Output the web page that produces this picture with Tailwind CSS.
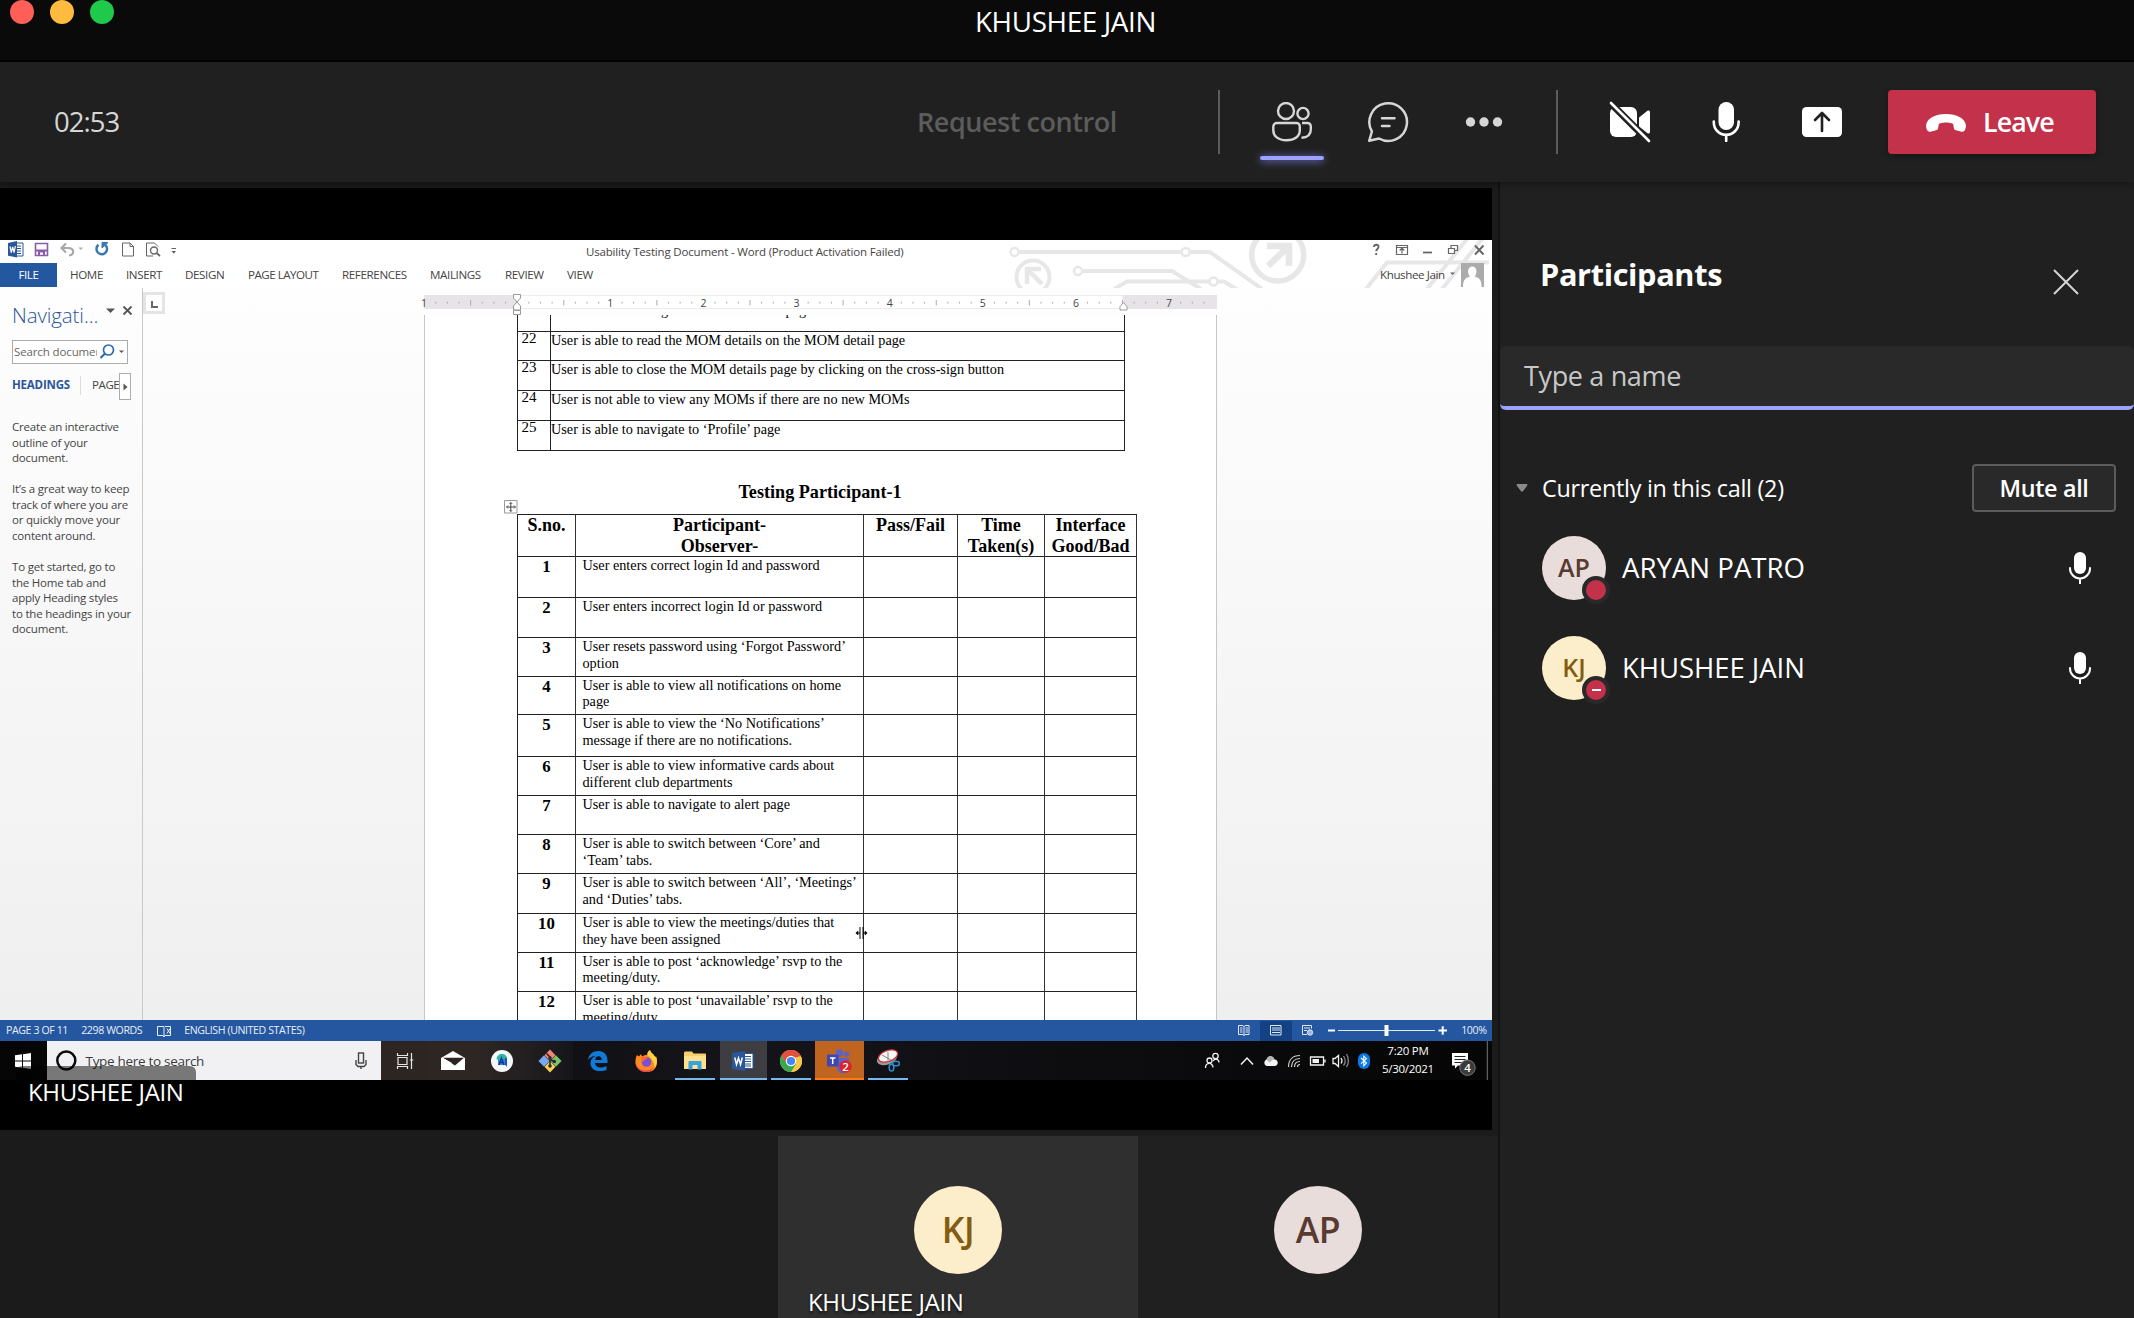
<!DOCTYPE html>
<html lang="en">
<head>
<meta charset="utf-8">
<title>Call with KHUSHEE JAIN</title>
<script src="https://cdn.jsdelivr.net/npm/@tailwindcss/browser@4"></script>
</head>
<body class="w-[2134px] h-[1318px] overflow-hidden bg-[#1b1b1b] font-['Open_Sans',sans-serif] text-white whitespace-nowrap">

<!-- Window title bar -->
<header class="relative h-[62px] bg-[#0a0a0a] border-b-2 border-black">
  <div class="flex gap-4 pl-[10px]">
    <i class="size-6 rounded-full bg-[#ff5f57]"></i><i class="size-6 rounded-full bg-[#ffbb3f]"></i><i class="size-6 rounded-full bg-[#1ec94c]"></i>
  </div>
  <div class="absolute inset-x-0 top-0 h-[44px] flex items-center justify-center text-[27.8px] tracking-[-0.35px] leading-none pr-[3px]">KHUSHEE JAIN</div>
</header>

<!-- Call toolbar -->
<section class="relative z-10 flex items-center h-[120px] bg-[#202020] shadow-[0_2px_6px_rgba(0,0,0,0.35)]">
  <div class="w-[917px] pl-[54px] text-[27.5px] tracking-[-1px] text-[#d6d6d6]">02:53</div>
  <div class="w-[301px] text-[27px] font-semibold tracking-[-0.45px] text-[#5c5c5c]">Request control</div>
  <div class="w-[2px] h-16 bg-[#5c5c5c]"></div>
  <div class="relative w-24 h-full ml-6 flex items-center justify-center">
    <svg class="w-10 h-10" viewBox="0 0 40 40" fill="none" stroke="#d6d6d6" stroke-width="2.4"><circle cx="14" cy="9" r="8"/><circle cx="31" cy="11.500" r="5.600"/><path d="M5 21h19.500a3.300 3.300 0 0 1 3.300 3.300v3.900c0 6-5 10-13.400 10S1.300 34 1.300 28.200v-3.900A3.600 3.600 0 0 1 5 21z"/><path d="M30 21h5.500a3.300 3.300 0 0 1 3.300 3.300v3.200c0 5-3.500 8-9.300 8.300"/></svg>
    <div class="absolute left-4 top-[94px] w-16 h-1 rounded-full bg-[#9ea2ff] shadow-[0_1px_8px_#7f85f5]"></div>
  </div>
  <div class="w-24 flex justify-center">
    <svg class="w-11 h-11" viewBox="0 0 44 44" fill="none" stroke="#d6d6d6" stroke-width="2.500" stroke-linecap="round" stroke-linejoin="round"><path d="M3.200 40.800l2.700-9.300A18.800 18.800 0 1 1 13 38.500z"/><path d="M16 18.300h12.500M16 26h7.500"/></svg>
  </div>
  <div class="w-24 flex justify-center"><svg class="w-10 h-10" viewBox="0 0 40 40" fill="#d6d6d6"><circle cx="6.500" cy="20" r="4.700"/><circle cx="20" cy="20" r="4.700"/><circle cx="33.500" cy="20" r="4.700"/></svg></div>
  <div class="w-[2px] h-16 bg-[#5c5c5c] ml-6 mr-6"></div>
  <div class="w-24 flex justify-center">
    <svg class="w-11 h-11" viewBox="0 0 44 44" fill="#fff"><rect x="2" y="7" width="27" height="30" rx="6"/><path d="M31 17.500l8.500-6.700c1-.8 2.500-.1 2.500 1.200v20c0 1.300-1.500 2-2.500 1.200L31 26.500z"/><path d="M2 2.500L42 42.500" stroke="#202020" stroke-width="7"/><path d="M3 3L41 41" stroke="#fff" stroke-width="2.600" stroke-linecap="round"/></svg>
  </div>
  <div class="w-24 flex justify-center">
    <svg class="w-7 h-10" viewBox="0 0 28 40" fill="none" stroke="#fff" stroke-width="2.600" stroke-linecap="round"><rect x="6.500" y="0" width="15.500" height="28" rx="7.750" fill="#fff" stroke="none"/><path d="M1.800 19.500v1a12.400 12.400 0 0 0 24.800 0v-1M14.200 33v6"/></svg>
  </div>
  <div class="w-24 flex justify-center">
    <svg class="w-10 h-[30px]" viewBox="0 0 40 30"><rect width="40" height="30" rx="4.500" fill="#fff"/><path d="M20 24V6.500M13 13l7-7 7 7" fill="none" stroke="#202020" stroke-width="2.600" stroke-linecap="round" stroke-linejoin="round"/></svg>
  </div>
  <div class="w-[208px] h-16 ml-[18px] flex items-center pl-[38px] pt-px rounded-[4px] bg-[#c4314b] text-[26.8px] font-semibold tracking-[-0.9px] shadow-[0_3px_6px_rgba(0,0,0,0.3)]">
    <svg class="w-10 h-[18px] mr-[17px]" viewBox="0 0 40 18" fill="#fff"><path d="M20 0C31 0 38.500 4.500 39.800 10.500c.4 2.200-.2 4.500-1.400 6.200-.7 1-1.800 1.300-2.900 1L30 16.200c-1.200-.3-2-1.200-2.200-2.500L27.200 10c-2-1-4.400-1.500-7.200-1.500S14.800 9 12.800 10l-.6 3.700c-.2 1.300-1 2.200-2.200 2.500l-5.500 1.500c-1.100.3-2.200 0-2.900-1C.4 15-.2 12.700.2 10.500 1.500 4.500 9 0 20 0z"/></svg>Leave
  </div>
</section>

<main class="flex h-[1136px]">
  <!-- Stage -->
  <div class="w-[1498px]">
    <div class="relative w-[1492px] h-[942px] mt-[6px] bg-black pt-[52px]">

      <!-- Shared screen: Word -->
      <div class="w-[1492px] h-[780px] overflow-hidden bg-gradient-to-b from-white to-[#efefef] text-[#444]">
        <div class="relative h-[48px] bg-white">
          <svg class="absolute inset-0" width="1492" height="48" viewBox="0 240 1492 48" fill="none" stroke="#e7e7e7" stroke-width="4">
            <path d="M1019 252h162M1190 252h20l52 37M1082 271h90l29 18M1114 289l13-7.500h82M1218 281.500h6l13 8M1366 289l21-26.500h102M1427 289l40-50M1442 289l40-50"/>
            <g stroke-width="2.500"><circle cx="1014.500" cy="252" r="4"/><circle cx="1185.700" cy="252" r="4"/><circle cx="1078" cy="271" r="4"/><circle cx="1213.500" cy="281.500" r="4"/></g>
            <circle cx="1033" cy="277" r="16.500"/><path d="M1027 284v-15h14M1028 270l14 14" stroke-width="4.500"/>
            <circle cx="1277.700" cy="255" r="26" stroke-width="5.500"/><path d="M1267 246h22v20M1288 247l-20 19" stroke-width="6.500"/>
          </svg>
          <div class="relative flex items-center h-[23px]">
            <svg class="w-[180px] h-[23px] shrink-0" viewBox="0 1 180 23" fill="none">
              <path d="M16 4h7v13h-7" fill="#fff" stroke="#2b579a"/><path d="M17 7h4M17 9.500h4M17 12h4M17 14.500h4" stroke="#2b579a"/><path d="M8 4l9-2v16.500l-9-1.800z" fill="#2b579a"/><path d="M10 7.500l1.300 6 1.400-5.500 1.400 5.500 1.300-6.500" stroke="#fff" stroke-width="1.200"/>
              <path d="M35.500 4.500h12v12h-12z" stroke="#8a5ba8" stroke-width="1.600"/><path d="M36 11.500h11M39 16v-3.500h5V16" stroke="#8a5ba8" stroke-width="2"/>
              <path d="M66 4.500L61.500 9l4.500 4.500M62 9h6c7 0 6.500 7 1 7.500" stroke="#a9a9a9" stroke-width="2.200"/><path d="M78.500 8.500h4.500l-2.200 2.500z" fill="#aaa"/>
              <path d="M98.500 5.800a5.300 5.300 0 1 0 6.800 0.200" stroke="#3a78b5" stroke-width="2.500"/><path d="M108 3.500h-6v5.500z" fill="#3a78b5" stroke="#3a78b5"/>
              <path d="M122.500 4h7.500l3.500 3.500v9.500h-11zM130 4v3.500h3.500" stroke="#666"/>
              <path d="M153 17h-6.500V4h8l3.500 3.500" stroke="#666"/><circle cx="154" cy="11.500" r="3.500" stroke="#666" stroke-width="1.400"/><path d="M156.500 14l3.500 3" stroke="#666" stroke-width="1.800"/>
              <path d="M171.500 9.500h4.500" stroke="#666"/><path d="M171.500 12h4.500l-2.200 2.500z" fill="#555"/>
            </svg>
            <div class="ml-[406px] w-[782px] shrink-0 text-[11.5px] tracking-[-0.17px] leading-none">Usability Testing Document - Word (Product Activation Failed)</div>
            <svg class="w-[117px] h-[23px] shrink-0" viewBox="1368 0 117 23" fill="none" stroke="#666" stroke-width="1.200">
              <path d="M1374 7c0-3 5-3 4.500 0 0 2-2.300 2-2.300 4.300M1376.200 13v2" stroke-width="1.900"/>
              <path d="M1396.500 5.500h11v9h-11zM1396.500 7.500h11M1402 13.500v-5M1399.700 10.500l2.300-2.300 2.300 2.300"/>
              <path d="M1423 12.500h9" stroke-width="1.800"/><path d="M1448.500 8.500h6v5h-6zM1451 8V5.500h6.500v5H1455"/><path d="M1475 5.500l8.500 9M1483.500 5.500l-8.500 9" stroke-width="1.900"/>
            </svg>
          </div>
          <div class="relative flex items-center h-[24px] text-[11.6px] tracking-[-0.37px] leading-none">
            <div class="w-[57px] h-[24px] flex items-center justify-center bg-[#2358a0] text-white mr-[13px]">FILE</div>
            <span class="w-[56px]">HOME</span><span class="w-[59px]">INSERT</span><span class="w-[63px]">DESIGN</span><span class="w-[94px] tracking-[-0.5px]">PAGE LAYOUT</span><span class="w-[88px]">REFERENCES</span><span class="w-[75px]">MAILINGS</span><span class="w-[62px]">REVIEW</span><span class="w-[813px]">VIEW</span>
            <span class="w-[70px] tracking-[-0.4px]">Khushee Jain</span>
            <svg class="w-[36px] h-[24px]" viewBox="0 0 36 24"><path d="M0 9.500h5L2.500 12z" fill="#666"/><path d="M11 0h23v24H11z" fill="#ababab"/><path d="M13 24c0-8 3-9.500 7-10.500-3-3-2.500-10 2.300-10s5.300 7 2.300 10c4 1 7 2.500 7 10.500z" fill="#fff"/></svg>
          </div>
        </div>

        <div class="flex h-[732px]">
          <!-- Navigation pane -->
          <aside class="w-[143px] border-r border-[#c8c8c8] pl-[12px] text-[11.5px] tracking-[-0.2px]">
            <div class="flex h-[52px] pt-[10px]">
              <div class="text-[20.5px] leading-[34px] font-light tracking-[-0.1px] text-[#2b579a] w-[93px]">Navigati...</div>
              <svg class="w-[30px] h-[20px]" viewBox="105 298 30 20"><path d="M106 308.500h9l-4.500 4.500z" fill="#555"/><path d="M123.500 306.500l8 8M131.500 306.500l-8 8" stroke="#555" stroke-width="1.800"/></svg>
            </div>
            <div class="flex items-center w-[116px] h-[24px] border border-[#ababab] bg-white pl-[1px] text-[#666]">
              <div class="w-[83px] overflow-hidden tracking-[-0.12px]">Search documer</div>
              <svg class="w-[29px] h-[20px] shrink-0" viewBox="-2 0 29 20" fill="none"><circle cx="9.500" cy="8" r="5" stroke="#2b6cb0" stroke-width="1.700"/><path d="M6 11.500L1.500 16" stroke="#2b6cb0" stroke-width="2.200"/><path d="M20 8.500h5L22.500 11z" fill="#555"/></svg>
            </div>
            <div class="flex items-center h-[27px] mt-[9px]">
              <div class="w-[69px] h-[19px] -mt-[2px] pb-px flex items-center font-bold text-[#2b579a] border-r border-[#ddd]">HEADINGS</div>
              <div class="w-[38px] pl-[11px] pb-[3px] tracking-[-0.4px]">PAGE</div>
              <div class="w-[12px] h-[27px] border border-[#ababab] bg-white flex items-center justify-center"><svg width="5" height="8" viewBox="0 0 5 8"><path d="M.5 0.500l4 3.500-4 3.500z" fill="#555"/></svg></div>
            </div>
            <div class="mt-[19px] leading-[15.57px]">
              <p>Create an interactive<br>outline of your<br>document.</p>
              <p class="mt-[15.57px]">It’s a great way to keep<br>track of where you are<br>or quickly move your<br>content around.</p>
              <p class="mt-[15.57px]">To get started, go to<br>the Home tab and<br>apply Heading styles<br>to the headings in your<br>document.</p>
            </div>
          </aside>
          <div class="w-[281px] pt-[4px]"><div class="size-[22px] border-[3px] border-[#e4e4e4] bg-white flex items-center justify-center"><i class="size-[7px] border-l-2 border-b-2 border-[#666] mt-[3px]"></i></div></div>

          <!-- Document -->
          <div class="w-[793px] pt-[7px]">
            <svg id="ruler" class="block overflow-visible" width="793" height="20" viewBox="424 295 793 20"></svg>
            <div class="relative h-[705px] overflow-hidden bg-white border-x border-[#c6c6c6] font-['Liberation_Serif',serif] text-black">
              <div id="list" class="w-[608px] ml-[92px] -mt-[14px] text-[14.24px] leading-[17px]"></div>
              <div class="w-[608px] ml-[91px] mt-[31px] h-[32px] text-center text-[18.15px] font-bold leading-[20px]">Testing Participant-1</div>
              <div id="tests" class="w-[620px] ml-[92px] border-l border-[#222]"></div>
              <svg class="absolute left-[79px] top-[185px]" width="14" height="14" viewBox="0 0 14 14" fill="#fff" stroke="#999"><path d="M.5.5h12.500v12.500H.5z"/><path d="M6.800 2.500v9M2.500 7h9" stroke="#444"/><path d="M5.300 4l1.500-1.500L8.300 4M5.300 10l1.500 1.500L8.300 10M4 5.500L2.500 7 4 8.500M10 5.500L11.500 7 10 8.500" stroke="#444" fill="none" stroke-width=".8"/></svg>
              <svg class="absolute left-[430px] top-[611px]" width="13" height="14" viewBox="0 0 13 14" stroke="#000" fill="#000"><path d="M5 1v12M8 1v12M1.500 7H5M8 7h3.500"/><path d="M3 5L.8 7 3 9zM10 5l2.200 2L10 9z" stroke-width=".5"/></svg>
            </div>
          </div>
        </div>
      </div>

      <!-- Word status bar -->
      <div class="flex items-center h-[21px] bg-[#2457a0] text-[10.6px] tracking-[-0.4px] leading-none text-[#e8eef7] pl-[6px]">
        <span class="w-[75.2px]">PAGE 3 OF 11</span><span class="w-[76px]">2298 WORDS</span>
        <svg class="w-[27px] h-[14px]" viewBox="0 0 27 14" fill="none" stroke="#e8eef7"><path d="M7 2.500H.5v9H6l1 1.500 1-1.500h5.500v-9H8L7 3.500v9M10 4.500l3 5M13 4.500l-3 5"/></svg>
        <span class="w-[1054px]">ENGLISH (UNITED STATES)</span>
        <svg class="w-[223px] h-[21px]" viewBox="1239 0 223 21" fill="none" stroke="#dfe8f5">
          <path d="M1239.500 5.500h4.500l1 1 1-1h4v9h-4l-1 1-1-1h-4.500zM1245 6v10M1241 8h2.500M1241 10h2.500M1241 12h2.500M1246.500 8h2.500M1246.500 10h2.500M1246.500 12h2.500"/>
          <path d="M1261 1h32v20h-32z" fill="#134183" stroke="none"/><path d="M1271.500 5.500h10.500v9.500h-10.500zM1273 8h8M1273 10h8M1273 12.500h8"/>
          <path d="M1308 14.500h-4.500v-9h9v3M1305 8h6M1305 10.500h3"/><circle cx="1311" cy="12.500" r="2.700" fill="#9db9e0"/>
          <path d="M1329 10.500h7M1439.500 10.500h8.500M1443.700 6.300v8.500" stroke="#fff" stroke-width="2"/><path d="M1339 10.500h97"/><path d="M1387.500 5v11" stroke="#fff" stroke-width="4"/>
        </svg>
        <span>100%</span>
      </div>

      <!-- Windows taskbar -->
      <div class="flex h-[39px] bg-gradient-to-r from-[#050505] via-[#14141a] to-[#060606]">
        <div class="w-[46.5px] shrink-0 flex items-center justify-center"><svg width="16" height="16" viewBox="0 0 16 16" fill="#fff"><path d="M0 2.300L7 1.300v6.200H0zM8 1.200L16 0v7.500H8zM0 8.500h7v6.200l-7-1zM8 8.500h8V16l-8-1.200z"/></svg></div>
        <div class="w-[334.5px] shrink-0 flex items-center bg-[#f1f1f3] text-[#3b3b3b] pl-[8px]">
          <svg width="23" height="24" viewBox="0 0 23 24"><circle cx="11.300" cy="11.500" r="9" fill="none" stroke="#0a0a0a" stroke-width="2.500"/></svg>
          <span class="ml-[8px] w-[269px] pt-px text-[13.5px] tracking-[-0.3px]">Type here to search</span>
          <svg width="12" height="20" viewBox="0 0 12 20" fill="none" stroke="#444" stroke-width="1.400"><rect x="3.500" y="2" width="5" height="10"/><path d="M1 9v4.500l2 2h6l2-2V9M6 15.500V18"/></svg>
        </div>
        <div class="w-[47px] shrink-0 flex items-center justify-center bg-[#2c2522]"><svg width="18" height="18" viewBox="0 0 18 18" fill="none" stroke="#e6e6e6" stroke-width="1.200"><path d="M2 5.500h9v7H2zM1.500 1v2.500h10V1M1.500 17v-2.500h10V17M15.500 1v16M13.800 8h3.500"/></svg></div>
        <div class="w-[48.4px] shrink-0 pl-[2px] flex items-center justify-center bg-[#2d2623]"><svg width="24" height="20" viewBox="0 0 24 20"><path d="M0 7L12 0l12 7v12H0z" fill="#fff"/><path d="M2 6.800h21L14 14.500 10 12z" fill="#2a2422"/><path d="M1 7l10 5.500" stroke="#fff"/></svg></div>
        <div class="w-[48.4px] shrink-0 pl-[2px] flex items-center justify-center bg-gradient-to-r from-[#2d2623] to-[#231f20]"><svg width="22" height="22" viewBox="0 0 22 22"><circle cx="11" cy="11" r="11" fill="#f4f8f8"/><path d="M7 8h9v9l-2-2H7z" fill="#3d7fe6"/><path d="M5.500 9.500C5.500 6 8 4 11 4s5 2 5 5z" fill="#2bb6a0"/><path d="M8 15l2.500-7 2.500 7M9 12.500h3M15 8v7" stroke="#0a3a8c" stroke-width="1.300" fill="none"/></svg></div>
        <div class="w-[48.4px] shrink-0 pl-[2px] flex items-center justify-center bg-gradient-to-r from-[#231f20] to-[#15151a]"><svg width="24" height="24" viewBox="0 0 24 24"><path d="M12 .5l5.500 5.700-5.500 5.700-5.500-5.700z" fill="#f0857a"/><path d="M18 6.300l5.500 5.700-5.500 5.700-5.500-5.700z" fill="#7cc46a"/><path d="M12 12.100l5.500 5.700-5.500 5.700-5.500-5.700z" fill="#f8cf5a"/><path d="M6 6.300l5.500 5.700L6 17.700.5 12z" fill="#76aaf0"/><path d="M8.500 4.500L12 8v9M12 10.500l4 2" stroke="#2b2b2b" stroke-width="1.600" fill="none"/><circle cx="12" cy="17" r="1.800" fill="#2b2b2b"/><circle cx="12" cy="9" r="1.800" fill="#2b2b2b"/><circle cx="16.300" cy="12.500" r="1.800" fill="#2b2b2b"/></svg></div>
        <div class="w-[48.4px] shrink-0 pl-[2px] flex items-center justify-center"><svg width="20" height="20" viewBox="0 0 20 20"><path d="M0 9C1 3 5 0 10.500 0 16 0 19.500 4 19.500 9.500V12H7c.3 3 3 4.500 6 4.500 2 0 4-.6 5.500-1.500v4c-2 .8-4 1.200-6.500 1.200C6 20.200 2.500 17 2.500 12c0-3 1.800-5.600 5-7C4.500 5 2 6.500 0 9zm7.200 0h6.500c0-2.400-1-3.800-3.200-3.800S7.400 6.700 7.200 9z" fill="#0f7bd8"/></svg></div>
        <div class="w-[48.4px] shrink-0 pl-[2px] flex items-center justify-center"><svg width="23" height="22" viewBox="0 0 23 22"><path d="M2 5l2 1.500L6 4l1 2.500C9 5 10 5 12 5c0-2 1-4 3-5 .5 3 4 4 5 7 .7 1 .8-1 .8-1 2.500 5 2 16-9.300 16C4 22 0 17 .5 11 .6 9 1 7 2 5z" fill="#ff8a1f"/><path d="M15 0c.5 3 4 4 5 7 .7 1 .8-1 .8-1 1.700 4 1.500 9-1.300 12 0-6-2-8-7-13 0-2 .500-4 2.500-5z" fill="#ffd23f"/><path d="M.6 12c1 5 5 8.500 10.500 8.500 4 0 7-2 8.400-3.500C17 21 14 22 11.500 22 4.500 22 .6 17 .6 12z" fill="#f0405a"/><circle cx="11.500" cy="12" r="4.800" fill="#7a4fd6"/><path d="M6 7c3-1 5 0 6.500 2-3 0-4 1-4 3-2-1-3-3-2.500-5z" fill="#ff6a2b"/></svg></div>
        <div class="relative w-[48.4px] shrink-0 pl-[2px] flex items-center justify-center"><svg width="22" height="20" viewBox="0 0 22 20"><path d="M0 2.500C0 1 .5.500 1.500.5H8l1.500 2H21c.6 0 1 .4 1 1V18H0z" fill="#f5cf6b"/><path d="M0 5h22v13H0z" fill="#fde18f"/><path d="M4.500 18.500V11c0-.6.400-1 1-1h11c.6 0 1 .4 1 1v7.500h-4V14h-5v4.500z" fill="#35a3df"/></svg><i class="absolute bottom-0 left-[5px] w-10 h-[2px] bg-[#76b9ed]"></i></div>
        <div class="relative w-[47px] ml-[1.4px] shrink-0 flex items-center justify-center bg-[#3e3e42]"><svg width="22" height="20" viewBox="0 0 22 20"><path d="M11 2.500h10v15H11z" fill="#fff" stroke="#2b579a"/><path d="M13 5.500h6M13 8h6M13 10.500h6M13 13h6M13 15h6" stroke="#2b579a" stroke-width="1.200"/><path d="M0 2l13-2v20L0 18z" fill="#2b579a"/><path d="M2.800 6.500l1.700 7 2-6.500 2 6.500 1.800-7" stroke="#fff" stroke-width="1.500" fill="none"/></svg><i class="absolute bottom-0 inset-x-0 h-[2px] bg-[#76b9ed]"></i></div>
        <div class="relative w-[48.4px] shrink-0 flex items-center justify-center"><svg width="22" height="22" viewBox="0 0 22 22"><circle cx="11" cy="11" r="11" fill="#f7c945"/><path d="M11 11L1.500 5.500A11 11 0 0 1 20.500 5.500z" fill="#e2513f"/><path d="M1.500 5.500L8 16l3-5 1 10.900A11 11 0 0 1 1.500 5.500z" fill="#34a853"/><path d="M11 11L6.500 14 9.500 21.900l3-.1L16 14z" fill="#34a853"/><path d="M15.500 7h5.800A11 11 0 0 1 11 22l5-8z" fill="#f7c945"/><path d="M1.500 5.500A11 11 0 0 1 20.800 6.200H11L5.500 12z" fill="#e2513f"/><circle cx="11" cy="11" r="5.200" fill="#fff"/><circle cx="11" cy="11" r="4.100" fill="#4285f4"/></svg><i class="absolute bottom-0 left-[4px] w-10 h-[2px] bg-[#76b9ed]"></i></div>
        <div class="relative w-[48.4px] shrink-0 flex items-center justify-center bg-[#c0651f]"><svg width="26" height="24" viewBox="0 0 26 24"><circle cx="13.500" cy="4" r="3.800" fill="#5b62c9"/><circle cx="20.500" cy="5" r="2.600" fill="#5b62c9"/><path d="M9 9h14v8a6 6 0 0 1-12 3z" fill="#5b62c9"/><rect x="1" y="5.500" width="11.500" height="12" rx="1" fill="#3f47b0"/><path d="M4 9h5.500M6.700 9v6" stroke="#fff" stroke-width="1.500"/><circle cx="19.500" cy="17.500" r="6.200" fill="#d8232f"/><text x="19.500" y="21.700" fill="#fff" font-size="11.500" text-anchor="middle" font-family="Open Sans" font-weight="600">2</text></svg><i class="absolute bottom-0 inset-x-0 h-[2px] bg-[#ff7a1a]"></i></div>
        <div class="relative w-[48.4px] shrink-0 flex items-center justify-center"><svg width="24" height="23" viewBox="0 0 24 23" fill="none"><ellipse cx="11" cy="9.500" rx="10.500" ry="6" transform="rotate(-20 11 9.500)" fill="#9a9a9a"/><ellipse cx="12" cy="7" rx="10" ry="5.500" transform="rotate(-20 12 7)" fill="#f5f5f5" stroke="#c8303a" stroke-width="1.200"/><path d="M6 6l9 5M12 3v10" stroke="#888"/><ellipse cx="15.500" cy="18.500" rx="2.300" ry="3.500" stroke="#2a8fd0" stroke-width="1.600"/><ellipse cx="20" cy="14.500" rx="3.500" ry="2.300" stroke="#2a8fd0" stroke-width="1.600"/></svg><i class="absolute bottom-0 left-[4px] w-10 h-[2px] bg-[#76b9ed]"></i></div>
        <svg class="ml-[288px] w-[176px] h-[39px] shrink-0" viewBox="1200 1041 176 39" fill="none" stroke="#f2f2f2" stroke-width="1.300">
          <circle cx="1215.500" cy="1056" r="2.700"/><circle cx="1209.500" cy="1060.500" r="2.500"/><path d="M1205.500 1068c0-6 7.500-6 7.500-.5M1213 1061c2-3 6-2 6 1.500"/>
          <path d="M1241 1064.500l6-6.500 6 6.500" stroke-width="1.500"/>
          <path d="M1266.500 1066a3.500 3.500 0 0 1 0-6.500c1-4.500 7-4.500 8 0 4 0 4.500 6 .5 6.500z" fill="#f2f2f2" stroke="none"/><path d="M1266.500 1059.500c1-4.500 7-4.500 8 0-3 0-3 2-5 3z" fill="#b5b5b5" stroke="none"/>
          <path d="M1288.500 1067c0-7 4-11.500 11.500-11.500M1291.500 1067c0-5 3-8.500 8.500-8.500M1294.500 1067c0-3.500 2-5.500 5.500-5.500M1297.500 1067c0-1.800 1-2.500 2.500-2.500" stroke="#cfcfcf" stroke-width="1.200"/>
          <path d="M1310.500 1057h13v8h-13zM1325 1059.500v3"/><path d="M1312.500 1059h6.500v4h-6.500z" fill="#f2f2f2" stroke="none"/>
          <path d="M1333 1058.500h2l3.500-3v11l-3.500-3h-2zM1341 1058c1 1.500 1 4 0 5.500"/><path d="M1343.500 1056c2 3 2 7 0 9.500M1346.500 1054c2.500 4 2.500 9.500 0 13" stroke="#888"/>
          <rect x="1358" y="1053" width="12" height="16" rx="6" fill="#0a78e6" stroke="none"/><path d="M1361 1058l5.500 5-2.700 2.700v-9.500l2.700 2.500-5.500 5" stroke="#fff" stroke-width="1.100"/>
        </svg>
        <div class="w-[64px] shrink-0 text-center text-[11.5px] tracking-[-0.27px] leading-[18.3px] pt-[1px]">7:20 PM<br>5/30/2021</div>
        <svg class="w-[48px] h-[39px] shrink-0" viewBox="1440 1041 48 39"><path d="M1452 1053h16v12.500h-10l-3 3v-3h-3z" fill="#fff"/><path d="M1454.500 1056.500h11M1454.500 1059.500h11M1454.500 1062.500h7" stroke="#222"/><circle cx="1467.500" cy="1067.700" r="7.700" fill="#3b3b3b" stroke="#777" stroke-width="1"/><text x="1467.500" y="1071.800" fill="#fff" font-size="11.500" font-weight="600" text-anchor="middle" font-family="Open Sans">4</text><path d="M1487.300 1041v39" stroke="#777"/></svg>
      </div>
      <div class="absolute left-[16px] top-[878px] w-[180px] h-[48px] rounded-[6px] bg-black/50 flex items-center pl-[12px] pt-[3px] text-[24px] tracking-[-0.38px] leading-none">KHUSHEE JAIN</div>
    </div>

    <!-- Filmstrip -->
    <div class="flex h-[182px] mt-[6px] pl-[778px]">
      <div class="relative w-[360px] bg-[#2f2f2f] pt-[50px]">
        <div class="size-[88px] mx-auto rounded-full bg-[#fdeecb] text-[#835c12] flex items-center justify-center text-[35.5px] font-semibold tracking-[-0.5px]">KJ</div>
        <div class="absolute left-[30px] top-[148px] h-[36px] flex items-center text-[24px] tracking-[-0.38px] leading-none [text-shadow:0_2px_3px_rgba(0,0,0,0.7)]">KHUSHEE JAIN</div>
      </div>
      <div class="w-[360px] bg-[#202020] pt-[50px]">
        <div class="size-[88px] mx-auto rounded-full bg-[#e8dddb] text-[#593a30] flex items-center justify-center text-[35.5px] font-semibold tracking-[-0.5px]">AP</div>
      </div>
    </div>
  </div>

  <!-- Participants panel -->
  <div class="w-[636px] bg-[#202020] border-l-2 border-[#131313]">
    <div class="flex h-[164px] pl-[40px] pt-[71px]">
      <h2 class="w-[513px] h-[42px] text-[30.7px] font-bold tracking-[-0.35px] leading-[42px]">Participants</h2>
      <svg class="mt-[16px]" width="26" height="26" viewBox="0 0 26 26"><path d="M1 1l24 24M25 1L1 25" stroke="#d6d6d6" stroke-width="2"/></svg>
    </div>
    <div class="h-[64px] bg-[#292929] rounded-[6px] border-b-4 border-[#9ea2ff] pl-[24px] flex items-center text-[27px] tracking-[-0.35px] text-[#c8c8c8]">Type a name</div>
    <div class="flex items-center h-[48px] mt-[54px] pl-[16px]">
      <svg width="12" height="10" viewBox="0 0 12 10"><path d="M1.500 1h9c1 0 1.200 1 .6 1.700L7 8.300c-.6.600-1.400.6-2 0L.9 2.700C.3 2 .5 1 1.500 1z" fill="#8a8a8a"/></svg>
      <div class="ml-[14px] w-[430px] text-[23.4px] tracking-[-0.28px] pt-[2px]">Currently in this call (2)</div>
      <button class="w-[144px] h-[48px] rounded-[4px] border-2 border-[#5c5c5c] bg-[#292929] text-[23.4px] font-semibold tracking-[-0.35px] pt-[2px] leading-none">Mute all</button>
    </div>
    <div class="flex items-center h-[64px] mt-[24px] pl-[42px]">
      <div class="relative size-16 rounded-full bg-[#e8dddb] text-[#593a30] flex items-center justify-center text-[25px] font-semibold">AP<i class="absolute left-[40px] top-[40px] size-7 rounded-full border-4 border-[#292929] bg-[#c4314b]"></i></div>
      <div class="ml-[16px] w-[446px] text-[27.6px]">ARYAN PATRO</div>
      <svg width="24" height="32" viewBox="0 0 24 32" fill="none" stroke="#fff" stroke-width="2" stroke-linecap="round"><rect x="6" y="0" width="12" height="22" rx="6" fill="#fff" stroke="none"/><path d="M2 16v.5a10 10 0 0 0 20 0V16M12 27v4.500"/></svg>
    </div>
    <div class="flex items-center h-[64px] mt-[36px] pl-[42px]">
      <div class="relative size-16 rounded-full bg-[#fdeecb] text-[#835c12] flex items-center justify-center text-[25px] font-semibold">KJ<i class="absolute left-[40px] top-[40px] size-7 rounded-full border-4 border-[#292929] bg-[#c4314b] flex items-center justify-center"><b class="w-[9px] h-[2.5px] bg-white"></b></i></div>
      <div class="ml-[16px] w-[446px] text-[27.5px] tracking-[-0.05px]">KHUSHEE JAIN</div>
      <svg width="24" height="32" viewBox="0 0 24 32" fill="none" stroke="#fff" stroke-width="2" stroke-linecap="round"><rect x="6" y="0" width="12" height="22" rx="6" fill="#fff" stroke="none"/><path d="M2 16v.5a10 10 0 0 0 20 0V16M12 27v4.500"/></svg>
    </div>
  </div>
</main>

<script>
  // Ruler: one inch is 93.1px, eight ticks per inch
  let r = '<rect x="424" y="295" width="793" height="14" fill="#e6e4e7"/><rect x="517" y="295.500" width="606" height="13" fill="#fff" stroke="#ececec"/>';
  for (let i = -7; i < 60; i++) {
    const x = 517.2 + i * 11.64;
    if (i === 0 || x > 1210) continue;
    if (i % 8 === 0) r += `<text x="${x}" y="306.500" font-size="10.500" text-anchor="middle" font-family="Open Sans" fill="#444">${i / 8}</text>`;
    else r += i % 4 === 0 ? `<path d="M${x} 300v5.500" stroke="#aaa"/>` : `<path d="M${x} 301.800v1.800" stroke="#aaa"/>`;
  }
  r += '<text x="424" y="306.500" font-size="10.500" text-anchor="middle" font-family="Open Sans" fill="#444">1</text>';
  r += '<g fill="#fff" stroke="#999"><path d="M513.500 294.500h7v3.500l-3.500 4-3.500-4z"/><path d="M513.500 310v-4l3.500-4 3.500 4v4zM513.500 310.500h7v4h-7zM1120 310v-3.500l3.500-4 3.500 4v3.500z"/></g>';
  document.getElementById('ruler').innerHTML = r;

  const list = [['', 30, 'User is able to navigate to ‘MOM detail’ page'], ['22', 29, 'User is able to read the MOM details on the MOM detail page'], ['23', 30, 'User is able to close the MOM details page by clicking on the cross-sign button'], ['24', 30, 'User is not able to view any MOMs if there are no new MOMs'], ['25', 30, 'User is able to navigate to ‘Profile’ page']];
  document.getElementById('list').innerHTML = list.map(([n, h, t]) =>
    `<div class="flex border-t border-x border-[#222]" style="height:${h}px"><div class="w-[33px] border-r border-[#222] pl-[3.5px] text-[15px] leading-[12px]">${n}</div><div>${t}</div></div>`).join('') + '<div class="h-px bg-[#222]"></div>';

  const cols = 'border-r border-[#333] text-center';
  const tests = [[41, 'User enters correct login Id and password'], [40, 'User enters incorrect login Id or password'], [38.5, 'User resets password using ‘Forgot Password’<br>option'], [38.5, 'User is able to view all notifications on home<br>page'], [42, 'User is able to view the ‘No Notifications’<br>message if there are no notifications.'], [38.5, 'User is able to view informative cards about<br>different club departments'], [39.5, 'User is able to navigate to alert page'], [39, 'User is able to switch between ‘Core’ and<br>‘Team’ tabs.'], [40, 'User is able to switch between ‘All’, ‘Meetings’<br>and ‘Duties’ tabs.'], [38.5, 'User is able to view the meetings/duties that<br>they have been assigned'], [39.5, 'User is able to post ‘acknowledge’ rsvp to the<br>meeting/duty.'], [40, 'User is able to post ‘unavailable’ rsvp to the<br>meeting/duty.']];
  const row = (h, a, b, c, d, e, head) =>
    `<div class="grid grid-cols-[58px_288px_94px_87px_92px] border-t border-[#222] ${head ? 'text-[18px] font-bold leading-[21px]' : ''}" style="height:${h}px"><div class="${cols} ${head ? '' : 'text-[16.8px] font-bold leading-[20px]'}">${a}</div><div class="border-r border-[#333] ${head ? 'text-center' : 'pl-[6.5px] text-[14.24px] leading-[16.5px]'}">${b}</div><div class="${cols}">${c}</div><div class="${cols}">${d}</div><div class="${cols}">${e}</div></div>`;
  document.getElementById('tests').innerHTML = row(42, 'S.no.', 'Participant-<br>Observer-', 'Pass/Fail', 'Time<br>Taken(s)', 'Interface<br>Good/Bad', true) + tests.map(([h, t], i) => row(h, i + 1, t, '', '', '', false)).join('');
</script>
</body>
</html>
